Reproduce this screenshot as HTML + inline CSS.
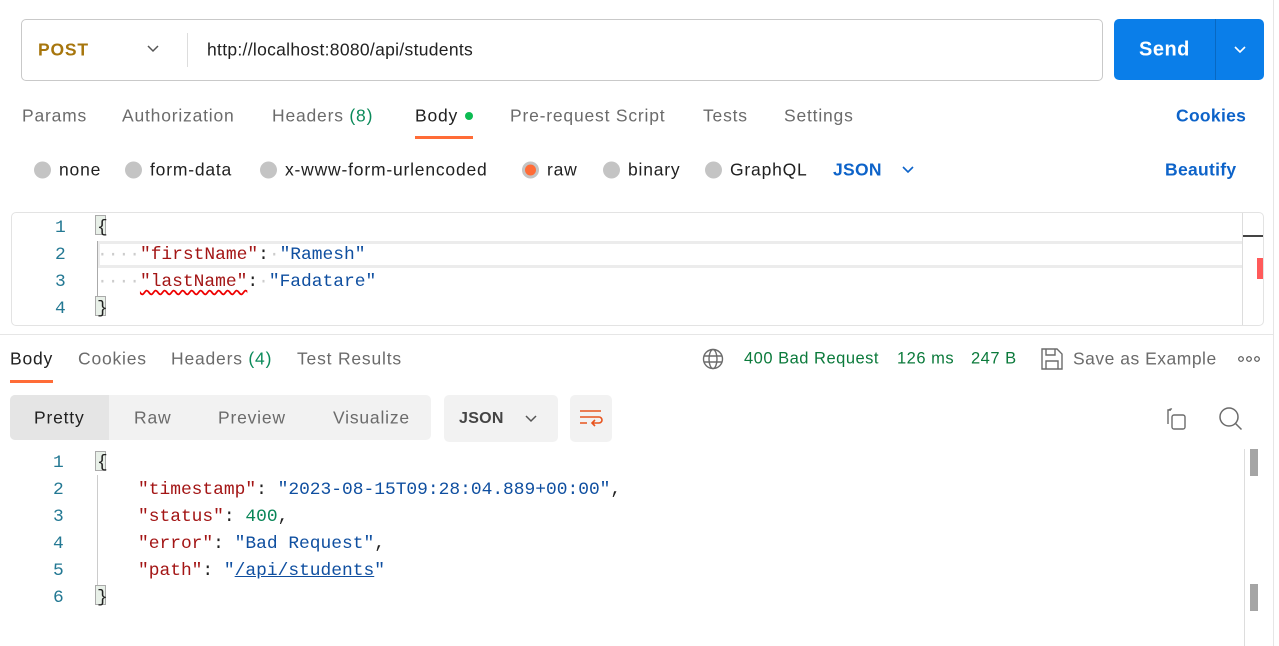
<!DOCTYPE html>
<html><head><meta charset="utf-8"><style>
*{margin:0;padding:0;box-sizing:border-box}
body{width:1279px;height:646px;background:#fff;position:relative;overflow:hidden;font-family:"Liberation Sans",sans-serif;color:#212121}
.a{position:absolute;white-space:nowrap}
.t{font-size:17.5px;letter-spacing:0.8px;color:#6b6b6b;transform:translateY(-50%)}
.m{font-family:"Liberation Mono",monospace;font-size:17.9px;transform:translateY(-50%)}
.k{color:#a31515}.s{color:#0f4fa0}.n{color:#098658}.ln{color:#237893}
.rad{position:absolute;width:17px;height:17px;border-radius:50%;background:#c4c4c4;transform:translateY(-50%)}
.br{position:absolute;width:11px;height:20px;background:#e8f0e8;border:1px solid #aaa}
</style></head><body>
<div style="position:absolute;left:1273px;top:0;width:1px;height:646px;background:#e6e6e6"></div>
<!-- URL bar -->
<div class="a" style="left:21px;top:19px;width:1082px;height:62px;border:1px solid #c9c9c9;border-radius:5px"></div>
<div class="a t" style="left:38px;top:50px;color:#a7760d;font-weight:bold">POST</div>
<svg class="a" style="left:146px;top:44px" width="14" height="10"><path d="M2 2l5 5 5-5" fill="none" stroke="#555" stroke-width="1.5"/></svg>
<div class="a" style="left:187px;top:33px;width:1px;height:34px;background:#ddd"></div>
<div class="a t" style="left:207px;top:50px;color:#212121;letter-spacing:0.3px">http://localhost:8080/api/students</div>
<div class="a" style="left:1114px;top:19px;width:150px;height:61px;background:#0a7ee9;border-radius:5px"></div>
<div class="a" style="left:1215px;top:19px;width:1px;height:61px;background:#0868c2"></div>
<div class="a t" style="left:1139px;top:50px;color:#fff;font-weight:bold;font-size:20px;letter-spacing:0.5px">Send</div>
<svg class="a" style="left:1233px;top:45px" width="14" height="10"><path d="M2 2l5 5 5-5" fill="none" stroke="#fff" stroke-width="1.6"/></svg>
<!-- tabs -->
<div class="a t" style="left:22px;top:116px">Params</div>
<div class="a t" style="left:122px;top:116px">Authorization</div>
<div class="a t" style="left:272px;top:116px">Headers <span style="color:#0b8a5a">(8)</span></div>
<div class="a t" style="left:415px;top:116px;color:#212121">Body</div>
<div class="a" style="left:465px;top:112px;width:8px;height:8px;border-radius:50%;background:#0cbb52"></div>
<div class="a" style="left:415px;top:136px;width:58px;height:3px;background:#ff6c37"></div>
<div class="a t" style="left:510px;top:116px">Pre-request Script</div>
<div class="a t" style="left:703px;top:116px">Tests</div>
<div class="a t" style="left:784px;top:116px">Settings</div>
<div class="a t" style="left:1176px;top:116px;color:#0d63c9;font-weight:bold;letter-spacing:0.3px">Cookies</div>
<!-- radios -->
<div class="rad" style="left:34px;top:170px"></div><div class="a t" style="left:59px;top:170px;color:#212121">none</div>
<div class="rad" style="left:125px;top:170px"></div><div class="a t" style="left:150px;top:170px;color:#212121">form-data</div>
<div class="rad" style="left:260px;top:170px"></div><div class="a t" style="left:285px;top:170px;color:#212121">x-www-form-urlencoded</div>
<div class="rad" style="left:522px;top:170px;background:#ff6c37;border:3px solid #c4c4c4"></div><div class="a t" style="left:547px;top:170px;color:#212121">raw</div>
<div class="rad" style="left:603px;top:170px"></div><div class="a t" style="left:628px;top:170px;color:#212121">binary</div>
<div class="rad" style="left:705px;top:170px"></div><div class="a t" style="left:730px;top:170px;color:#212121">GraphQL</div>
<div class="a t" style="left:833px;top:170px;color:#0d63c9;font-weight:bold;letter-spacing:0.3px">JSON</div>
<svg class="a" style="left:901px;top:165px" width="14" height="10"><path d="M2 2l5 5 5-5" fill="none" stroke="#0d63c9" stroke-width="1.6"/></svg>
<div class="a t" style="left:1165px;top:170px;color:#0d63c9;font-weight:bold;letter-spacing:0.3px">Beautify</div>
<!-- editor -->
<div class="a" style="left:11px;top:212px;width:1253px;height:114px;border:1px solid #e3e3e3;border-radius:5px"></div>
<div class="a" style="left:1242px;top:213px;width:1px;height:112px;background:#ddd"></div>
<div class="a" style="left:1243px;top:235px;width:20px;height:2px;background:#444"></div>
<div class="a" style="left:1257px;top:258px;width:6px;height:21px;background:#ff5a5a"></div>
<div class="a" style="left:97px;top:241px;width:1145px;height:27px;border:3px solid #ececec;border-right:none"></div>
<div class="a" style="left:97px;top:241px;width:1px;height:55px;background:#aaa"></div>
<div class="a m ln" style="left:55px;top:228px">1</div>
<div class="a m ln" style="left:55px;top:255px">2</div>
<div class="a m ln" style="left:55px;top:282px">3</div>
<div class="a m ln" style="left:55px;top:309px">4</div>
<div class="br" style="left:95px;top:215px"></div>
<div class="a m" style="left:97px;top:228px">{</div>
<div class="a m" style="left:97px;top:255px"><span style="color:#ccc">····</span><span class="k">"firstName"</span>:<span style="color:#ccc">·</span><span class="s">"Ramesh"</span></div>
<div class="a m" style="left:97px;top:282px"><span style="color:#ccc">····</span><span class="k" style="text-decoration:underline wavy #e00;text-underline-offset:3px">"lastName"</span>:<span style="color:#ccc">·</span><span class="s">"Fadatare"</span></div>
<div class="br" style="left:95px;top:296px"></div>
<div class="a m" style="left:97px;top:309px">}</div>
<div class="a" style="left:0;top:334px;width:1273px;height:1px;background:#e6e6e6"></div>
<!-- response tabs -->
<div class="a t" style="left:10px;top:359px;color:#212121">Body</div>
<div class="a" style="left:10px;top:380px;width:43px;height:3px;background:#ff6c37"></div>
<div class="a t" style="left:78px;top:359px">Cookies</div>
<div class="a t" style="left:171px;top:359px">Headers <span style="color:#0b8a5a">(4)</span></div>
<div class="a t" style="left:297px;top:359px">Test Results</div>
<svg class="a" style="left:702px;top:348px" width="22" height="22" fill="none" stroke="#6b6b6b" stroke-width="1.4"><circle cx="11" cy="11" r="9.5"/><ellipse cx="11" cy="11" rx="4" ry="9.5"/><path d="M2 8h18M2 14h18"/></svg>
<div class="a t" style="left:744px;top:359px;color:#0b7a3b;font-size:16.5px;letter-spacing:0.5px">400 Bad Request</div>
<div class="a t" style="left:897px;top:359px;color:#0b7a3b;font-size:16.5px;letter-spacing:0.5px">126 ms</div>
<div class="a t" style="left:971px;top:359px;color:#0b7a3b;font-size:16.5px;letter-spacing:0.5px">247 B</div>
<svg class="a" style="left:1040px;top:347px" width="24" height="24" fill="none" stroke="#6b6b6b" stroke-width="1.4"><path d="M2 2h15l5 5v15H2z"/><path d="M6 2v6h9V2M6 22v-8h12v8"/></svg>
<div class="a t" style="left:1073px;top:359px;letter-spacing:0.5px">Save as Example</div>
<svg class="a" style="left:1238px;top:355px" width="22" height="8" fill="none" stroke="#555" stroke-width="1.2"><circle cx="3" cy="4" r="2.3"/><circle cx="11" cy="4" r="2.3"/><circle cx="19" cy="4" r="2.3"/></svg>
<!-- toolbar -->
<div class="a" style="left:10px;top:395px;width:421px;height:45px;background:#f2f2f2;border-radius:5px"></div>
<div class="a" style="left:10px;top:395px;width:99px;height:45px;background:#e5e5e5;border-radius:5px 0 0 5px"></div>
<div class="a t" style="left:34px;top:418px;color:#212121">Pretty</div>
<div class="a t" style="left:134px;top:418px">Raw</div>
<div class="a t" style="left:218px;top:418px">Preview</div>
<div class="a t" style="left:333px;top:418px">Visualize</div>
<div class="a" style="left:444px;top:395px;width:114px;height:47px;background:#f2f2f2;border-radius:5px"></div>
<div class="a t" style="left:459px;top:419px;font-weight:bold;color:#444;font-size:16px;letter-spacing:0.3px">JSON</div>
<svg class="a" style="left:524px;top:414px" width="14" height="10"><path d="M2 2l5 5 5-5" fill="none" stroke="#555" stroke-width="1.5"/></svg>
<div class="a" style="left:570px;top:395px;width:42px;height:47px;background:#f2f2f2;border-radius:5px"></div>
<svg class="a" style="left:579px;top:408px" width="24" height="20" fill="none" stroke="#e8541e" stroke-width="1.6"><path d="M1 3h21M1 9h19a3 3 0 0 1 0 6h-7M16 12l-3 3 3 3M1 15h7"/></svg>
<svg class="a" style="left:1165px;top:407px" width="24" height="24" fill="none" stroke="#6b6b6b" stroke-width="1.4"><path d="M6 3H3v14"/><rect x="7" y="8" width="13" height="14" rx="2"/><path d="M4 3a3 3 0 0 1 3 -1h0"/></svg>
<svg class="a" style="left:1218px;top:406px" width="26" height="26" fill="none" stroke="#6b6b6b" stroke-width="1.5"><circle cx="11" cy="11" r="9"/><path d="M17.5 17.5l6 6"/></svg>
<!-- response code -->
<div class="a" style="left:1244px;top:449px;width:1px;height:197px;background:#ddd"></div>
<div class="a" style="left:1250px;top:449px;width:8px;height:27px;background:#a5a5a5"></div>
<div class="a" style="left:1250px;top:584px;width:8px;height:27px;background:#a5a5a5"></div>
<div class="a" style="left:97px;top:475px;width:1px;height:110px;background:#ccc"></div>
<div class="a m ln" style="left:53px;top:463px">1</div>
<div class="a m ln" style="left:53px;top:490px">2</div>
<div class="a m ln" style="left:53px;top:517px">3</div>
<div class="a m ln" style="left:53px;top:544px">4</div>
<div class="a m ln" style="left:53px;top:571px">5</div>
<div class="a m ln" style="left:53px;top:598px">6</div>
<div class="br" style="left:95px;top:451px"></div>
<div class="a m" style="left:97px;top:463px">{</div>
<div class="a m" style="left:138px;top:490px"><span class="k">"timestamp"</span>: <span class="s">"2023-08-15T09:28:04.889+00:00"</span>,</div>
<div class="a m" style="left:138px;top:517px"><span class="k">"status"</span>: <span class="n">400</span>,</div>
<div class="a m" style="left:138px;top:544px"><span class="k">"error"</span>: <span class="s">"Bad Request"</span>,</div>
<div class="a m" style="left:138px;top:571px"><span class="k">"path"</span>: <span class="s">"<u>/api/students</u>"</span></div>
<div class="br" style="left:95px;top:585px"></div>
<div class="a m" style="left:97px;top:598px">}</div>
</body></html>
